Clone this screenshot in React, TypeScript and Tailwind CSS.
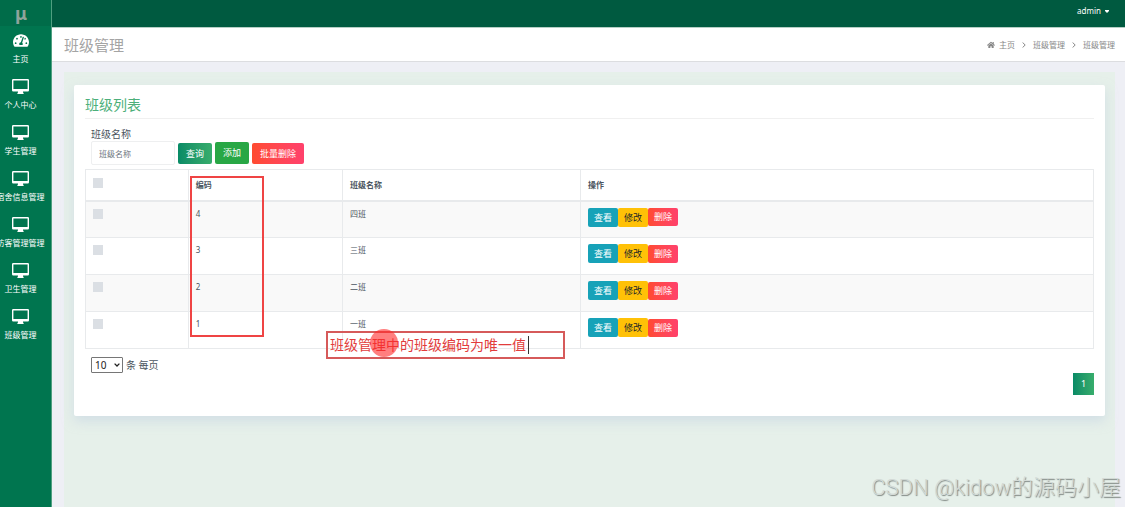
import { FaTachometerAlt, FaHome } from "react-icons/fa";

const menu = ["主页", "个人中心", "学生管理", "宿舍信息管理", "访客管理管理", "卫生管理", "班级管理"];

const rows = [
  { code: "4", name: "四班" },
  { code: "3", name: "三班" },
  { code: "2", name: "二班" },
  { code: "1", name: "一班" },
];

function MonitorIcon() {
  return (
    <svg viewBox="0 0 17 15" className="h-[15px] w-[17px]" aria-hidden="true">
      <path
        fill="#fff"
        fillRule="evenodd"
        d="M1.2 0h14.6Q17 0 17 1.2v10.1q0 1.2-1.2 1.2H11v1.3h.6V15H5.4v-1.2H6v-1.3H1.2Q0 12.500 0 11.300V1.200Q0 0 1.200 0ZM1.400 1.400v8.600h14.200V1.400Z"
      />
    </svg>
  );
}

function Chevron() {
  return (
    <svg viewBox="0 0 4 6" className="h-[6px] w-[4px]" aria-hidden="true">
      <path d="M.6.5 3.200 3 .6 5.500" fill="none" stroke="#888" strokeWidth="1" />
    </svg>
  );
}

function Sidebar() {
  return (
    <aside className="w-[52px] shrink-0 overflow-hidden border-r border-[#4f9f80] bg-[#00754f]">
      <div className="flex h-[26px] items-center bg-[#006c49] pl-[15px] text-[18px] leading-[26px] font-bold text-[#8fa39b]">
        μ
      </div>
      <nav className="flex w-[41px] flex-col">
        {menu.map((label, i) => (
          <a
            key={label}
            href="#"
            className="flex h-[46px] flex-col items-center justify-center gap-[5px] text-[8px] leading-[12px] whitespace-nowrap text-white"
          >
            {i === 0 ? <FaTachometerAlt className="h-[15px] w-[16px]" /> : <MonitorIcon />}
            <span>{label}</span>
          </a>
        ))}
      </nav>
    </aside>
  );
}

export default function App() {
  return (
    <div className="relative flex min-h-screen overflow-hidden bg-[#eeeff5] font-['Noto_Sans','Noto_Sans_CJK_SC',sans-serif] text-[#4b5560]">
      <Sidebar />

      <div className="flex min-w-0 flex-1 flex-col">
        <header className="flex h-[28px] items-start justify-end border-b border-[#b5cfc5] bg-[#005a40] pt-[5px] pr-[16px]">
          <button className="flex items-center gap-[4px] text-[8px] leading-[12px] text-white">
            admin
            <svg viewBox="0 0 4 3" className="h-[3px] w-[4px]" aria-hidden="true">
              <path d="M0 0h4v1L2 3 0 1Z" fill="#fff" />
            </svg>
          </button>
        </header>

        <div className="flex h-[34px] items-center justify-between border-b border-[#dcdde0] bg-white pr-[10px] pl-[12px]">
          <h1 className="text-[15px] leading-[20px] text-[#a4a4a4]">班级管理</h1>
          <nav className="flex items-center gap-[7px] text-[8px] leading-[12px] text-[#888]">
            <a href="#" className="flex items-center gap-[4px]">
              <FaHome className="size-[8px]" />
              主页
            </a>
            <Chevron />
            <a href="#">班级管理</a>
            <Chevron />
            <span>班级管理</span>
          </nav>
        </div>

        <main className="mt-[10px] mr-[10px] ml-[12px] flex-1 bg-[#e6f0ea] px-[10px] pt-[13px]">
          <section className="rounded-[2px] bg-white px-[11px] pt-[10px] pb-[21px] shadow-[0_5px_12px_rgba(190,205,225,0.5)]">
            <h2 className="border-b border-[#f0f0f0] pb-[3px] text-[14px] leading-[20px] text-[#4caf7a]">班级列表</h2>

            <form className="mt-[9px] px-[6px]" onSubmit={(e) => e.preventDefault()}>
              <label htmlFor="name" className="block text-[10px] leading-[13px]">
                班级名称
              </label>
              <div className="flex items-center gap-[3px]">
                <input
                  id="name"
                  placeholder="班级名称"
                  className="h-[24px] w-[84px] rounded-[2px] border border-[#eeeff0] px-[7px] text-[8px] placeholder:text-[#6c757d]"
                />
                <button className="h-[21px] rounded-[2px] bg-linear-to-r from-[#078b66] to-[#37ad6c] px-[8px] text-[9px] leading-[21px] text-white">
                  查询
                </button>
                <button className="h-[22px] rounded-[2px] bg-[#28a745] px-[8px] text-[9px] leading-[22px] text-white">
                  添加
                </button>
                <button className="h-[21px] rounded-[2px] bg-linear-to-r from-[#ff4b2f] to-[#ff416c] px-[8px] text-[9px] leading-[21px] text-white">
                  批量删除
                </button>
              </div>
            </form>

            <table className="mt-[4px] w-full table-fixed border-collapse text-left align-top text-[8px] leading-[12px] [&_td]:border [&_td]:border-[#e8eaec] [&_td]:px-[7px] [&_td]:align-top [&_th]:border [&_th]:border-b-2 [&_th]:border-[#e8eaec] [&_th]:px-[7px]">
              <colgroup>
                <col className="w-[10.2%]" />
                <col className="w-[15.3%]" />
                <col className="w-[23.6%]" />
                <col />
              </colgroup>
              <thead>
                <tr className="h-[31px]">
                  <th>
                    <input
                      type="checkbox"
                      aria-label="全选"
                      className="mb-[4px] block size-[10px] appearance-none bg-[#dbdfe4]"
                    />
                  </th>
                  <th>编码</th>
                  <th>班级名称</th>
                  <th>操作</th>
                </tr>
              </thead>
              <tbody>
                {rows.map((row) => (
                  <tr key={row.code} className="h-[37px] odd:bg-[#f9f9f9]">
                    <td className="pt-[7px]">
                      <input
                        type="checkbox"
                        aria-label={row.name}
                        className="block size-[10px] appearance-none bg-[#dbdfe4]"
                      />
                    </td>
                    <td className="pt-[6px]">{row.code}</td>
                    <td className="pt-[6px]">{row.name}</td>
                    <td className="pt-[6px]">
                      <div className="flex items-center text-[9px] leading-[19px]">
                        <button className="rounded-[2px] bg-[#17a2b8] px-[6px] text-white">查看</button>
                        <button className="rounded-[2px] bg-[#ffc107] px-[6px] text-[#212529]">修改</button>
                        <button className="rounded-[2px] bg-linear-to-r from-[#ff4b2f] to-[#ff416c] px-[6px] leading-[18px] text-white">
                          删除
                        </button>
                      </div>
                    </td>
                  </tr>
                ))}
              </tbody>
            </table>

            <div className="mt-[8px] flex items-center gap-[3px] px-[6px] text-[10px] leading-[15px]">
              <div className="grid items-center">
                <select
                  id="size"
                  defaultValue="10"
                  className="col-start-1 row-start-1 h-[16px] w-[32px] appearance-none rounded-[1px] border border-[#767676] bg-white pl-[3px] text-[10px] leading-[14px] text-[#222]"
                >
                  <option>10</option>
                  <option>25</option>
                  <option>50</option>
                </select>
                <svg
                  viewBox="0 0 6 4"
                  className="pointer-events-none col-start-1 row-start-1 mr-[3px] h-[4px] w-[6px] justify-self-end"
                  aria-hidden="true"
                >
                  <path d="M.6.6 3 3 5.400.6" fill="none" stroke="#222" strokeWidth="1.300" />
                </svg>
              </div>
              <label htmlFor="size">条 每页</label>
            </div>
            <div className="flex justify-end">
              <button className="h-[22px] w-[21px] bg-linear-to-r from-[#078b66] to-[#37ad6c] text-[9px] leading-[22px] text-white">
                1
              </button>
            </div>
          </section>
        </main>
      </div>

      <div className="pointer-events-none absolute top-[176px] left-[190px] h-[161px] w-[74px] border-2 border-[#ef4444]" />
      <div className="pointer-events-none absolute top-[331px] left-[326px] flex h-[28px] w-[239px] items-center border-2 border-[#d65a5a] pl-[2px] text-[14px] leading-[20px] whitespace-nowrap text-[#e23c3c]">
        班级管理中的班级编码为唯一值
        <span className="ml-[2px] h-[18px] w-px bg-[#333]" />
      </div>
      <div className="pointer-events-none absolute top-[329px] left-[370px] size-[28px] rounded-full bg-[#ff2a2a]/60" />
      <div className="pointer-events-none absolute right-[4px] bottom-[4px] font-[Roboto,'Noto_Sans_CJK_SC',sans-serif] text-[22px] leading-[30px] font-light whitespace-nowrap text-[#d3dad6] [text-shadow:1px_1px_1px_#7f8783]">
        CSDN @kidow的源码小屋
      </div>
    </div>
  );
}
